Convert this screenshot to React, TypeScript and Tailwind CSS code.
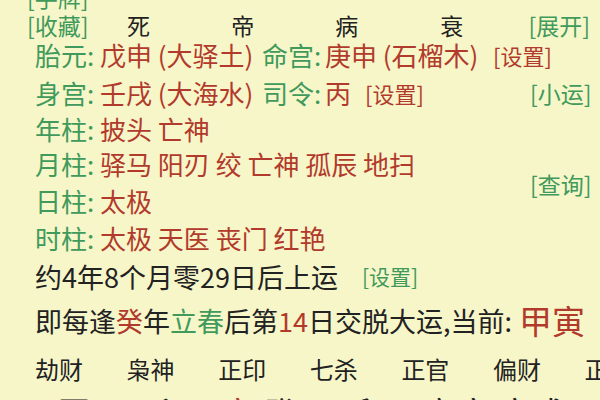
const G = "text-[#3f9a5c]"
const R = "text-[#b23a2c]"
const K = "text-[#222222]"

function Row({ h, className = "", children }: { h: string; className?: string; children: React.ReactNode }) {
  return <div className={`flex items-center whitespace-nowrap ${h} ${className}`}>{children}</div>
}

function Label({ children, w = "w-[65px]" }: { children: React.ReactNode; w?: string }) {
  return <span className={`${G} ${w} shrink-0`}>{children}</span>
}

export default function App() {
  const shishen = ["劫财", "枭神", "正印", "七杀", "正官", "偏财", "正"]
  const dayun = [
    { t: "丙辰", w: "w-[96px]", red: false },
    { t: "乙卯", w: "w-[69px]", red: false },
    { t: "甲寅", w: "w-[76px]", red: true },
    { t: "癸丑", w: "w-[77px]", red: false },
    { t: "壬子", w: "w-[83px]", red: false },
    { t: "辛亥", w: "w-[74px]", red: false },
    { t: "庚戌", w: "w-[80px]", red: false },
  ]

  return (
    <div
      className="w-[600px] h-[400px] overflow-hidden bg-[#f7f6c9] text-[26px] leading-none font-normal"
      style={{ fontFamily: '"Noto Sans CJK SC", "Noto Sans", sans-serif' }}
    >
      <div className="flex flex-col pl-[35px] pr-[10px]">
        <Row h="h-[29px] -mt-[17px] -ml-[8px] text-[23px]">
          <span className={G}>[手牌]</span>
        </Row>

        <Row h="h-[26px] -ml-[8px] text-[23px]">
          <span className={`${G} w-[101px]`}>[收藏]</span>
          <span className={`${K} w-[105px]`}>死</span>
          <span className={`${K} w-[105px]`}>帝</span>
          <span className={`${K} w-[106px]`}>病</span>
          <span className={`${K} w-[89px]`}>衰</span>
          <span className={G}>[展开]</span>
        </Row>

        <Row h="h-[34px]">
          <Label>胎元:</Label>
          <span className={`${R} w-[162px] shrink-0`}>戊申 (大驿土)</span>
          <Label w="w-[63px]">命宫:</Label>
          <span className={`${R} w-[168px] shrink-0`}>庚申 (石榴木)</span>
          <span className={`${R} text-[22px]`}>[设置]</span>
        </Row>

        <Row h="h-[42px]">
          <Label>身宫:</Label>
          <span className={`${R} w-[162px] shrink-0`}>壬戌 (大海水)</span>
          <Label w="w-[63px]">司令:</Label>
          <span className={`${R} w-[40px] shrink-0`}>丙</span>
          <span className={`${R} text-[22px] w-[165px] shrink-0`}>[设置]</span>
          <span className={`${G} text-[23px]`}>[小运]</span>
        </Row>

        <Row h="h-[30px]">
          <Label>年柱:</Label>
          <span className={R}>披头 亡神</span>
        </Row>

        <Row h="h-[40px]">
          <Label>月柱:</Label>
          <span className={R}>驿马 阳刃 绞 亡神 孤辰 地扫</span>
        </Row>

        <Row h="h-[34px]">
          <Label>日柱:</Label>
          <span className={`${R} w-[430px] shrink-0`}>太极</span>
          <span className={`${G} text-[23px] -translate-y-[17px]`}>[查询]</span>
        </Row>

        <Row h="h-[40px]">
          <Label>时柱:</Label>
          <span className={R}>太极 天医 丧门 红艳</span>
        </Row>

        <Row h="h-[36px] text-[27px]">
          <span className={`${K} w-[327px] shrink-0`}>约4年8个月零29日后上运</span>
          <span className={`${G} text-[21px]`}>[设置]</span>
        </Row>

        <Row h="h-[52px] text-[27px]">
          <span className={K}>即每逢</span>
          <span className={R}>癸</span>
          <span className={K}>年</span>
          <span className={G}>立春</span>
          <span className={K}>后第</span>
          <span className={R}>14</span>
          <span className={K}>日交脱大运,当前: </span>
          <span className={`${R} text-[33px] ml-[7px]`}>甲寅</span>
        </Row>

        <Row h="h-[46px] text-[24px]">
          {shishen.map((s) => (
            <span key={s} className={`${K} w-[91.6px] shrink-0`}>
              {s}
            </span>
          ))}
        </Row>

        <Row h="h-[40px] -ml-[13px] text-[34px] items-start pt-[4px]">
          {dayun.map((d) => (
            <span key={d.t} className={`${d.red ? R : K} ${d.w} shrink-0`}>
              {d.t}
            </span>
          ))}
        </Row>
      </div>
    </div>
  )
}
